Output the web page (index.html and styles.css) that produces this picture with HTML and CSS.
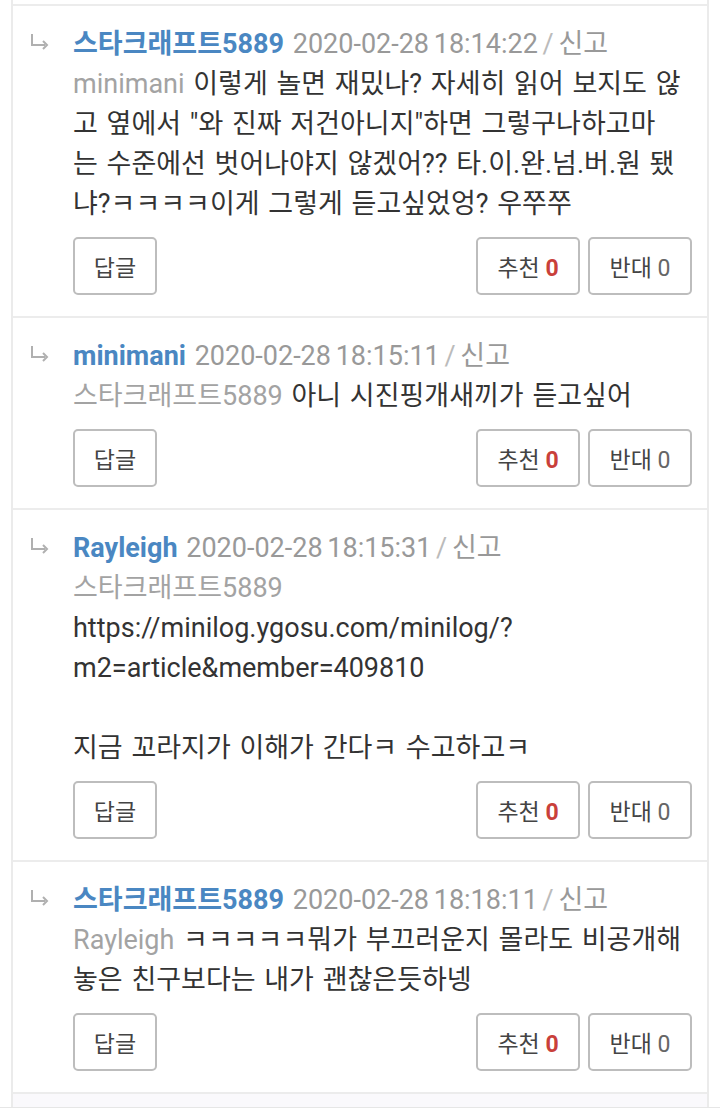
FILE: index.html
```html
<!DOCTYPE html>
<html lang="ko">
<head>
    <meta charset="UTF-8" />
    <meta name="viewport" content="width=device-width, initial-scale=1.0"/>
    <title>댓글</title>
    <link rel="stylesheet" href="styles.css">
</head>
<body>

<div class="comments">

    <!-- 댓글 1 -->
    <div class="comment">
        <div class="reply-mark">
            <svg width="20" height="16" viewBox="0 0 20 16"><path d="M2 0 V11 H15" fill="none" stroke="#b0b0b0" stroke-width="2"/><path d="M13 7 L17 11 L13 15" fill="none" stroke="#b0b0b0" stroke-width="2"/></svg>
        </div>
        <div class="comment-body">
            <div class="text">
                <span class="author">스타크래프트5889</span> <span class="meta">2020-02-28 18:14:22 <span class="slash">/</span> 신고</span><br>
                <span class="target">minimani</span> 이렇게 놀면 재밌나? 자세히 읽어 보지도 않<br>고 옆에서 "와 진짜 저건아니지"하면 그렇구나하고마<br>는 수준에선 벗어나야지 않겠어?? 타.이.완.넘.버.원 됐<br>냐?ㅋㅋㅋㅋ이게 그렇게 듣고싶었엉? 우쭈쭈
            </div>
            <div class="actions">
                <button class="btn btn-reply">답글</button>
                <div class="votes">
                    <button class="btn btn-vote">추천 <b class="up">0</b></button>
                    <button class="btn btn-vote">반대 <span class="down">0</span></button>
                </div>
            </div>
        </div>
    </div>

    <!-- 댓글 2 -->
    <div class="comment">
        <div class="reply-mark">
            <svg width="20" height="16" viewBox="0 0 20 16"><path d="M2 0 V11 H15" fill="none" stroke="#b0b0b0" stroke-width="2"/><path d="M13 7 L17 11 L13 15" fill="none" stroke="#b0b0b0" stroke-width="2"/></svg>
        </div>
        <div class="comment-body">
            <div class="text">
                <span class="author">minimani</span> <span class="meta">2020-02-28 18:15:11 <span class="slash">/</span> 신고</span><br>
                <span class="target">스타크래프트5889</span> 아니 시진핑개새끼가 듣고싶어
            </div>
            <div class="actions">
                <button class="btn btn-reply">답글</button>
                <div class="votes">
                    <button class="btn btn-vote">추천 <b class="up">0</b></button>
                    <button class="btn btn-vote">반대 <span class="down">0</span></button>
                </div>
            </div>
        </div>
    </div>

    <!-- 댓글 3 -->
    <div class="comment">
        <div class="reply-mark">
            <svg width="20" height="16" viewBox="0 0 20 16"><path d="M2 0 V11 H15" fill="none" stroke="#b0b0b0" stroke-width="2"/><path d="M13 7 L17 11 L13 15" fill="none" stroke="#b0b0b0" stroke-width="2"/></svg>
        </div>
        <div class="comment-body">
            <div class="text">
                <span class="author">Rayleigh</span> <span class="meta">2020-02-28 18:15:31 <span class="slash">/</span> 신고</span><br>
                <span class="target">스타크래프트5889</span><br>
                https://minilog.ygosu.com/minilog/?<br>m2=article&amp;member=409810<br>
                <br>
                지금 꼬라지가 이해가 간다ㅋ 수고하고ㅋ
            </div>
            <div class="actions">
                <button class="btn btn-reply">답글</button>
                <div class="votes">
                    <button class="btn btn-vote">추천 <b class="up">0</b></button>
                    <button class="btn btn-vote">반대 <span class="down">0</span></button>
                </div>
            </div>
        </div>
    </div>

    <!-- 댓글 4 -->
    <div class="comment">
        <div class="reply-mark">
            <svg width="20" height="16" viewBox="0 0 20 16"><path d="M2 0 V11 H15" fill="none" stroke="#b0b0b0" stroke-width="2"/><path d="M13 7 L17 11 L13 15" fill="none" stroke="#b0b0b0" stroke-width="2"/></svg>
        </div>
        <div class="comment-body">
            <div class="text">
                <span class="author">스타크래프트5889</span> <span class="meta">2020-02-28 18:18:11 <span class="slash">/</span> 신고</span><br>
                <span class="target">Rayleigh</span> ㅋㅋㅋㅋㅋ뭐가 부끄러운지 몰라도 비공개해<br>놓은 친구보다는 내가 괜찮은듯하넹
            </div>
            <div class="actions">
                <button class="btn btn-reply">답글</button>
                <div class="votes">
                    <button class="btn btn-vote">추천 <b class="up">0</b></button>
                    <button class="btn btn-vote">반대 <span class="down">0</span></button>
                </div>
            </div>
        </div>
    </div>

    <div class="comment-next"></div>
</div>

<div class="bottom-bar"></div>

</body>
</html>
```

FILE: styles.css
```css
body {
    margin: 0;
    padding: 0;
    background: #fff;
    color: #333;
    font-family: Roboto, "Noto Sans CJK KR", sans-serif;
}

.comments {
    margin: 0 11px;
    padding-top: 4px;
    border-left: 2px solid #ebebeb;
    border-right: 2px solid #ebebeb;
}

.comment {
    display: flex;
    border-top: 2px solid #ececec;
    padding: 18px 15px 21px 0;
}

.reply-mark {
    width: 60px;
    flex-shrink: 0;
    padding: 10px 0 0 17px;
    box-sizing: border-box;
}

.reply-mark svg {
    display: block;
}

.comment-body {
    flex: 1;
    min-width: 0;
}

.text {
    font-size: 27px;
    line-height: 40px;
    word-spacing: 2px;
    white-space: nowrap;
    color: #333;
}

.author {
    color: #4a87c2;
    font-weight: 700;
    word-spacing: 0;
}

.meta {
    color: #999;
    word-spacing: -2px;
}

.meta .slash {
    color: #bbb;
}

.target {
    color: #a3a3a3;
}

.actions {
    display: flex;
    justify-content: space-between;
    margin-top: 13px;
}

.votes {
    display: flex;
    gap: 8px;
}

.btn {
    height: 58px;
    background: #fff;
    border: 2px solid #bdbdbd;
    border-radius: 5px;
    font-family: inherit;
    font-size: 23px;
    color: #444;
    padding: 0;
    cursor: pointer;
}

.btn-reply {
    width: 84px;
}

.btn-vote {
    width: 104px;
}

.btn .up {
    color: #c9403a;
    font-weight: 700;
}

.btn .down {
    color: #666;
}

.comment-next {
    height: 13px;
    border-top: 2px solid #ececec;
    background: #faf9fc;
}

.bottom-bar {
    height: 8px;
    border-top: 1px solid #e6e6e6;
    background: #fff;
}
```
